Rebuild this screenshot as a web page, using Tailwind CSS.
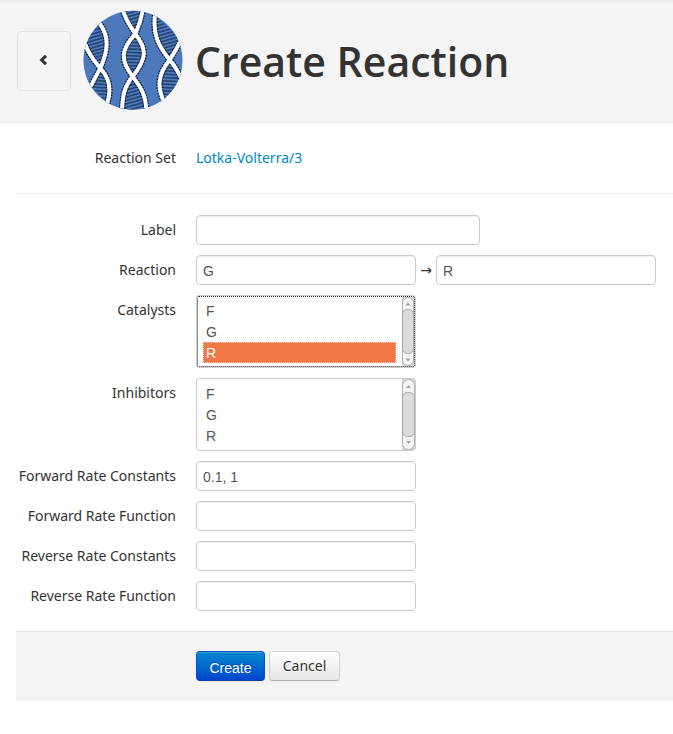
<!DOCTYPE html>
<html lang="en">
<head>
<meta charset="utf-8">
<meta name="viewport" content="width=device-width, initial-scale=1">
<title>Create Reaction</title>
<script src="https://cdn.jsdelivr.net/npm/@tailwindcss/browser@4"></script>
</head>
<body class="bg-white font-['Noto_Sans',sans-serif] text-sm leading-5 text-[#333]">
<header class="flex items-center border-b border-[#e9e9e9] bg-[#f4f4f4] bg-[linear-gradient(#ececec,#f4f4f4_5px)] py-[10px] pl-[17px] pr-4">
  <button type="button" aria-label="Back" class="flex h-[60px] w-[54px] shrink-0 items-center justify-center rounded border border-[#e3e3e3]">
    <svg class="h-3 w-3" viewBox="0 0 12 12" fill="none" stroke="#333" stroke-width="3" aria-hidden="true"><path d="M8 .8 3.600 5l4.400 4.200"/></svg>
  </button>
  <svg class="ml-3 h-[102px] w-[100px] shrink-0" viewBox="9 9 300 300" aria-hidden="true">
    <defs>
      <clipPath id="disc"><circle cx="159" cy="157" r="148.500"/></clipPath>
      <pattern id="rungUp" width="60" height="10" patternUnits="userSpaceOnUse" patternTransform="rotate(-16)"><path d="M0 5H60" stroke="#13284a" stroke-width="3.200"/></pattern>
      <pattern id="rungDown" width="60" height="10" patternUnits="userSpaceOnUse" patternTransform="rotate(3)"><path d="M0 5H60" stroke="#13284a" stroke-width="3.200"/></pattern>
      <g id="strands" fill="none">
        <path d="M58 45C88 85 85 125 62 178Q48 204 32 235"/>
        <path d="M14 105C28 145 48 165 62 182C86 208 96 240 82 285"/>
        <path d="M128 4C138 40 153 57 166 78C200 122 202 148 160 203C132 236 128 262 126 308"/>
        <path d="M189 4C182 42 174 60 166 78C122 124 120 158 160 208C184 240 198 264 199 308"/>
        <path d="M225 22C218 80 235 112 268 155C286 174 294 190 306 216"/>
        <path d="M304 94C292 118 282 136 268 157C235 198 230 235 252 282"/>
      </g>
    </defs>
    <circle cx="159" cy="157" r="148.500" fill="#4b79bc"/>
    <g clip-path="url(#disc)">
      <g fill="url(#rungUp)">
        <path d="M58 45C88 85 85 125 62 178C48 165 28 145 14 105Z"/>
        <path d="M128 4C138 40 153 57 166 78C174 60 182 42 189 4Z"/>
        <path d="M160 208C132 236 128 262 126 308H199C198 264 184 240 160 208Z"/>
        <path d="M225 22C218 80 235 112 268 155C282 136 292 118 304 94Z"/>
      </g>
      <g fill="url(#rungDown)">
        <path d="M62 182Q48 204 32 235L82 285C96 240 86 208 62 182Z"/>
        <path d="M166 78C200 122 202 148 160 203C120 158 122 124 166 78Z"/>
        <path d="M268 157C235 198 230 235 252 282L306 216C294 190 286 174 268 157Z"/>
      </g>
      <use href="#strands" stroke="#0b0f1a" stroke-width="19" stroke-dasharray="4 4"/>
      <use href="#strands" stroke="#fff" stroke-width="12"/>
    </g>
  </svg>
  <h1 class="ml-3 font-['Open_Sans',sans-serif] text-[41px] font-semibold leading-[48px]">Create Reaction</h1>
</header>

<main class="pl-4">
  <form>
    <div class="flex gap-5 border-b border-[#eee] pb-[25px] pt-[25px]">
      <span class="w-40 shrink-0 text-right">Reaction Set</span>
      <a href="#" class="text-[#0088cc]">Lotka-Volterra/3</a>
    </div>

    <div class="flex flex-col gap-[10px] pb-5 pt-[21px]">
      <div class="flex gap-5">
        <label for="label" class="w-40 shrink-0 pt-[5px] text-right">Label</label>
        <input id="label" type="text" class="h-[30px] w-[284px] rounded border border-[#ccc] px-[6px] pt-[2px] font-['Liberation_Sans',sans-serif] text-[#555] shadow-[inset_0_1px_1px_rgba(0,0,0,0.075)]">
      </div>
      <div class="flex gap-5">
        <label for="reactants" class="w-40 shrink-0 pt-[5px] text-right">Reaction</label>
        <div class="flex items-center">
          <input id="reactants" type="text" value="G" class="h-[30px] w-[220px] rounded border border-[#ccc] px-[6px] pt-[2px] font-['Liberation_Sans',sans-serif] text-[#555] shadow-[inset_0_1px_1px_rgba(0,0,0,0.075)]">
          <span class="w-5 text-center font-['DejaVu_Sans',sans-serif]">→</span>
          <input id="products" aria-label="Products" type="text" value="R" class="h-[30px] w-[220px] rounded border border-[#ccc] px-[6px] pt-[2px] font-['Liberation_Sans',sans-serif] text-[#555] shadow-[inset_0_1px_1px_rgba(0,0,0,0.075)]">
        </div>
      </div>
      <div class="flex gap-5">
        <label for="catalysts" class="w-40 shrink-0 pt-[5px] text-right">Catalysts</label>
        <div class="relative">
          <select id="catalysts" multiple size="3" class="block h-[73px] w-[220px] overflow-hidden rounded-[3px] border border-[#ccc] bg-white py-1 pl-[6px] pr-[19px] font-['Liberation_Sans',sans-serif] text-[#555] outline-1 -outline-offset-2 outline-dotted outline-[#222]">
            <option class="h-[21px] px-[3px] pb-0 pt-[3px] leading-[18px]">F</option>
            <option class="h-[21px] px-[3px] pb-0 pt-[3px] leading-[18px]">G</option>
            <option selected class="h-[21px] border border-dotted border-[#fbd3c0] px-[2px] pb-0 pt-[2px] leading-[18px] checked:bg-[linear-gradient(#f07746,#f07746)] checked:text-white">R</option>
          </select>
          <svg class="pointer-events-none absolute right-[2px] top-[2px] h-[69px] w-3" viewBox="0 0 12 69" aria-hidden="true">
            <rect width="12" height="69" fill="#d6d4d1"/>
            <rect x=".5" y=".5" width="11" height="68" rx="5.500" fill="#f5f4f3" stroke="#b3afaa"/>
            <rect x=".5" y="12.500" width="11" height="44" rx="5" fill="#dddbd9" stroke="#aaa6a1"/>
            <path d="M3.500 8.500 6 5.500l2.500 3zM3.500 61.500 6 64.500l2.500-3z" fill="#a5a19c"/>
          </svg>
        </div>
      </div>
      <div class="flex gap-5">
        <label for="inhibitors" class="w-40 shrink-0 pt-[5px] text-right">Inhibitors</label>
        <div class="relative">
          <select id="inhibitors" multiple size="3" class="block h-[73px] w-[220px] overflow-hidden rounded-[3px] border border-[#ccc] bg-white py-1 pl-[6px] pr-[19px] font-['Liberation_Sans',sans-serif] text-[#555]">
            <option class="h-[21px] px-[3px] pb-0 pt-[3px] leading-[18px]">F</option>
            <option class="h-[21px] px-[3px] pb-0 pt-[3px] leading-[18px]">G</option>
            <option class="h-[21px] px-[3px] pb-0 pt-[3px] leading-[18px]">R</option>
          </select>
          <svg class="pointer-events-none absolute right-px top-px h-[71px] w-[13px]" viewBox="0 0 13 71" aria-hidden="true">
            <rect width="13" height="71" fill="#d6d4d1"/>
            <rect x=".5" y=".5" width="12" height="70" rx="6" fill="#f5f4f3" stroke="#b3afaa"/>
            <rect x=".5" y="13.500" width="12" height="44" rx="5" fill="#dddbd9" stroke="#aaa6a1"/>
            <path d="M4 9 6.500 6 9 9zM4 62l2.500 3L9 62z" fill="#a5a19c"/>
          </svg>
        </div>
      </div>
      <div class="flex gap-5">
        <label for="fconst" class="flex w-40 shrink-0 justify-end whitespace-nowrap pt-[5px]">Forward Rate Constants</label>
        <input id="fconst" type="text" value="0.1, 1" class="h-[30px] w-[220px] rounded border border-[#ccc] px-[6px] pt-[2px] font-['Liberation_Sans',sans-serif] text-[#555] shadow-[inset_0_1px_1px_rgba(0,0,0,0.075)]">
      </div>
      <div class="flex gap-5">
        <label for="ffunc" class="flex w-40 shrink-0 justify-end whitespace-nowrap pt-[5px]">Forward Rate Function</label>
        <input id="ffunc" type="text" class="h-[30px] w-[220px] rounded border border-[#ccc] px-[6px] pt-[2px] font-['Liberation_Sans',sans-serif] text-[#555] shadow-[inset_0_1px_1px_rgba(0,0,0,0.075)]">
      </div>
      <div class="flex gap-5">
        <label for="rconst" class="flex w-40 shrink-0 justify-end whitespace-nowrap pt-[5px]">Reverse Rate Constants</label>
        <input id="rconst" type="text" class="h-[30px] w-[220px] rounded border border-[#ccc] px-[6px] pt-[2px] font-['Liberation_Sans',sans-serif] text-[#555] shadow-[inset_0_1px_1px_rgba(0,0,0,0.075)]">
      </div>
      <div class="flex gap-5">
        <label for="rfunc" class="flex w-40 shrink-0 justify-end whitespace-nowrap pt-[5px]">Reverse Rate Function</label>
        <input id="rfunc" type="text" class="h-[30px] w-[220px] rounded border border-[#ccc] px-[6px] pt-[2px] font-['Liberation_Sans',sans-serif] text-[#555] shadow-[inset_0_1px_1px_rgba(0,0,0,0.075)]">
      </div>
    </div>

    <div class="flex gap-1 border-t border-[#e5e5e5] bg-[#f4f4f4] pb-5 pl-[180px] pt-[19px]">
      <button type="submit" class="h-[30px] min-w-[69px] rounded border border-[#0055cc] border-b-[#003fa0] bg-linear-to-b from-[#0088cc] to-[#0044cc] px-3 pt-[3px] font-['Liberation_Sans',sans-serif] text-white shadow-[inset_0_1px_0_rgba(255,255,255,0.2),0_1px_2px_rgba(0,0,0,0.05)] text-shadow-[0_-1px_0_rgba(0,0,0,0.25)]">Create</button>
      <button type="button" class="h-[30px] min-w-[71px] rounded border border-[#d4d4d4] border-b-[#b3b3b3] bg-linear-to-b from-white to-[#e6e6e6] px-3 shadow-[inset_0_1px_0_rgba(255,255,255,0.2),0_1px_2px_rgba(0,0,0,0.05)] text-shadow-[0_1px_1px_rgba(255,255,255,0.75)]">Cancel</button>
    </div>
  </form>
</main>
</body>
</html>
